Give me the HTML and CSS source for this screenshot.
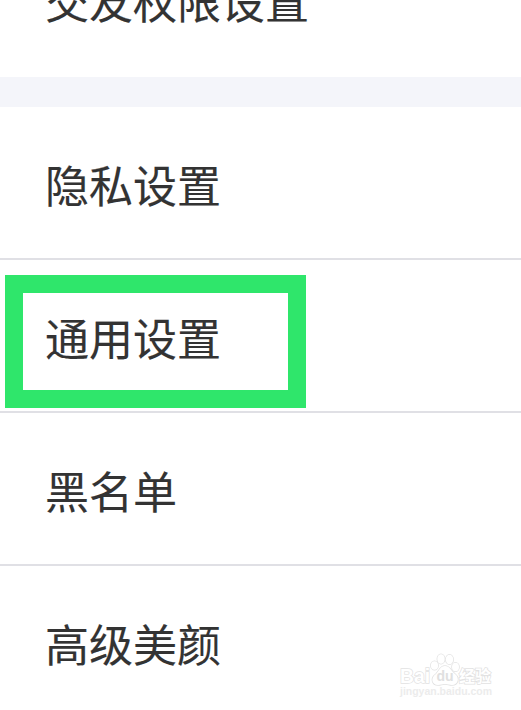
FILE: index.html
```html
<!DOCTYPE html>
<html lang="zh-CN">
<head>
<meta charset="utf-8">
<title>设置</title>
<link rel="stylesheet" href="styles.css">
</head>
<body>
<main class="settings">
  <section class="group group-top">
    <div class="row row-first"><span class="label">交友权限设置</span></div>
  </section>
  <section class="group">
    <div class="row"><span class="label">隐私设置</span></div>
    <div class="row"><span class="label">通用设置</span><div class="highlight"></div></div>
    <div class="row"><span class="label">黑名单</span></div>
    <div class="row"><span class="label">高级美颜</span></div>
  </section>
  <svg class="watermark" viewBox="0 0 98 48" width="98" height="48">
    <g class="outlined">
      <text class="bai" x="1" y="30" textLength="30" lengthAdjust="spacingAndGlyphs">Bai</text>
      <ellipse cx="35.500" cy="12.500" rx="3.600" ry="4.300"/>
      <ellipse cx="42" cy="6" rx="3.700" ry="4.800"/>
      <ellipse cx="50.500" cy="6.500" rx="3.700" ry="4.800"/>
      <ellipse cx="56.500" cy="14" rx="3.500" ry="4.300"/>
      <path d="M46 13c-5 0-6 5-9 8-6 4-4 11 2 11 3 0 4-1 7-1s4 1 7 1c6 0 8-7 3-11-4-3-5-8-10-8z"/>
      <text class="cn" x="60" y="29" textLength="32" lengthAdjust="spacingAndGlyphs">经验</text>
    </g>
    <text class="du" x="46" y="28" text-anchor="middle">du</text>
    <text class="url" x="1" y="42" textLength="92" lengthAdjust="spacingAndGlyphs">jingyan.baidu.com</text>
  </svg>
</main>
</body>
</html>
```
FILE: styles.css
```css
* { box-sizing: border-box; }
body { margin: 0; background: #fff; color: #333; font-family: "Noto Sans CJK SC", sans-serif; }
.settings { position: relative; height: 710px; overflow: hidden; }
.group-top { height: 107px; border-bottom: 30px solid #f4f5fa; overflow: hidden; display: flex; flex-direction: column; justify-content: flex-end; }
.row { position: relative; height: 153px; padding: 2px 45px 0; display: flex; align-items: center; flex-shrink: 0; border-bottom: 2px solid #e0e0e5; }
.row-first { border-bottom: 0; padding-bottom: 4px; }
.row:last-child { border-bottom-color: transparent; }
.label { font-size: 44px; line-height: 64px; white-space: nowrap; -webkit-text-stroke: 0.15px #333; }
.highlight { position: absolute; left: 5px; top: 15px; width: 301px; height: 133px; border: 18px solid #2fe66b; }
.watermark { position: absolute; left: 399px; top: 653px; font-family: "Liberation Sans", sans-serif; font-weight: bold; }
.outlined { fill: #fff; stroke: #e2e2e2; stroke-width: 1.5px; paint-order: stroke; }
.bai { font-size: 21px; }
.cn { font-family: "Noto Sans CJK SC", sans-serif; font-size: 16px; }
.du { fill: #e0e0e0; font-size: 14px; }
.url { fill: #ececec; font-size: 11px; }
```
